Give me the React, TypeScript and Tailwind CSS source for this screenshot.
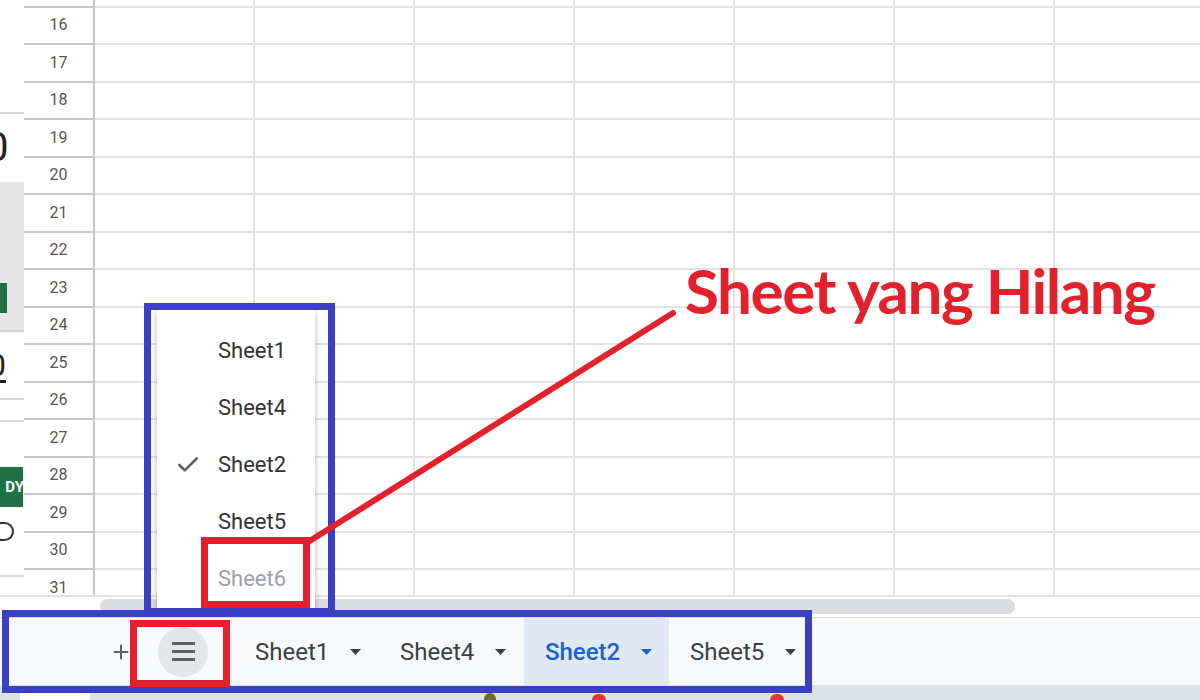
import { Check, Plus } from "lucide-react";

// rows 15..31, row 15 is mostly scrolled off the top
const rows = Array.from({ length: 17 }, (_, i) => 15 + i);
const colCount = 7;

interface MenuItem {
  name: string;
  checked?: boolean;
  hidden?: boolean;
}

const menuItems: MenuItem[] = [
  { name: "Sheet1" },
  { name: "Sheet4" },
  { name: "Sheet2", checked: true },
  { name: "Sheet5" },
  { name: "Sheet6", hidden: true },
];

const tabs = ["Sheet1", "Sheet4", "Sheet2", "Sheet5"];
const activeTab = "Sheet2";

const Caret = ({ color }: { color: string }) => (
  <svg width="11" height="6" viewBox="0 0 11 6">
    <path d="M0 0h11L5.5 6z" fill={color} />
  </svg>
);

// cut-off panel that peeks in on the far left
const LeftStrip = () => (
  <div className="w-[24px] shrink-0 flex flex-col overflow-hidden">
    <div className="h-[114px] shrink-0 border-b-2 border-[#d6d6d6]" />
    <div className="h-[68px] shrink-0 flex items-center">
      <span className="-ml-[14px] text-[40px] leading-none text-[#222]">0</span>
    </div>
    <div className="h-[150px] shrink-0 bg-[#e6e6e6] border-b-2 border-[#cfcfcf]">
      <div className="mt-[101px] h-[30px] w-[7px] bg-[#1e7145]" />
    </div>
    <div className="h-[68px] shrink-0 border-b-2 border-[#d6d6d6] flex items-center">
      <span className="-ml-[12px] text-[32px] leading-none text-[#222] underline underline-offset-4">0</span>
    </div>
    <div className="h-[22px] shrink-0 border-b-2 border-[#dcdcdc]" />
    <div className="h-[45px] shrink-0" />
    <div className="h-[40px] shrink-0 w-[23px] bg-[#1e7145] flex items-center justify-end overflow-hidden">
      <span className="-mr-[1px] text-[15px] font-bold text-white leading-none">DY</span>
    </div>
    <div className="h-[48px] shrink-0 flex items-center">
      <div className="-ml-[8px] w-[22px] h-[19px] shrink-0 rounded-full border-2 border-[#333]" />
    </div>
    <div className="h-[22px] shrink-0 border-b-2 border-[#d6d6d6]" />
  </div>
);

const App = () => {
  return (
    <div className="relative w-[1200px] h-[700px] overflow-hidden bg-white font-['Roboto',sans-serif]">
      <div className="flex flex-col h-full">
        {/* grid */}
        <div className="flex h-[595px] shrink-0 overflow-hidden">
          <LeftStrip />
          <div className="flex-1 overflow-hidden">
            <div className="-mt-[30px]">
              {rows.map((r) => (
                <div key={r} className="flex h-[37.5px]">
                  <div className="w-[71px] shrink-0 border-r-2 border-b-2 border-[#c8c8c8] flex items-center justify-center text-[16px] text-[#555]">
                    {r}
                  </div>
                  {Array.from({ length: colCount }, (_, c) => (
                    <div key={c} className="w-[160px] shrink-0 border-r-2 border-b-2 border-[#e2e2e2]" />
                  ))}
                </div>
              ))}
            </div>
          </div>
        </div>

        {/* horizontal scrollbar */}
        <div className="h-[23px] shrink-0 border-t-2 border-b border-t-[#e2e2e2] border-b-[#dadce0] pl-[100px] pt-[2px]">
          <div className="w-[915px] h-[15px] rounded-full bg-[#dadce0]" />
        </div>

        {/* sheet tabs bar */}
        <div className="h-[67px] shrink-0 bg-[#f8f9fa] flex items-stretch">
          <div className="pl-[110px] flex items-center">
            <Plus size={22} strokeWidth={2.2} className="text-[#5f6368]" />
          </div>
          <div className="ml-[26px] flex items-center">
            <div className="w-[50px] h-[50px] rounded-full bg-[#e3e5e8] flex flex-col items-center justify-center gap-[5px]">
              <div className="w-[23px] h-[3px] bg-[#5f6368]" />
              <div className="w-[23px] h-[3px] bg-[#5f6368]" />
              <div className="w-[23px] h-[3px] bg-[#5f6368]" />
            </div>
          </div>
          <div className="ml-[26px] flex items-stretch">
            {tabs.map((t) => {
              const active = t === activeTab;
              return (
                <div
                  key={t}
                  className={
                    active
                      ? "w-[145px] flex items-center pl-[21px] gap-[21px] bg-[#e1e9f6]"
                      : "w-[145px] flex items-center pl-[21px] gap-[21px]"
                  }
                >
                  <span
                    className={
                      active
                        ? "text-[24px] font-medium text-[#1a62cf]"
                        : "text-[24px] text-[#3c4043]"
                    }
                  >
                    {t}
                  </span>
                  <Caret color={active ? "#1a62cf" : "#3c4043"} />
                </div>
              );
            })}
          </div>
        </div>

        {/* strip of the window below */}
        <div className="flex-1 bg-[#dde3ec] flex items-end">
          <div className="ml-[20px] w-[70px] h-[7px] bg-white" />
          <div className="ml-[394px] w-[12px] h-[7px] rounded-t-full bg-[#6b6a2a]" />
          <div className="ml-[96px] w-[14px] h-[6px] rounded-t-full bg-[#e33]" />
          <div className="ml-[164px] w-[14px] h-[6px] rounded-t-full bg-[#e33]" />
        </div>
      </div>

      {/* sheet list menu */}
      <div className="absolute left-[157px] top-[310px] w-[158px] h-[298px] bg-white shadow-[0_2px_6px_rgba(0,0,0,0.3)] pt-[12px]">
        {menuItems.map((m) => (
          <div key={m.name} className="h-[57px] flex items-center">
            <div className="w-[61px] flex justify-center">
              {m.checked && <Check size={26} strokeWidth={2.4} className="text-[#5f6368]" />}
            </div>
            <span className={m.hidden ? "text-[22px] text-[#9aa0a6]" : "text-[22px] text-[#333]"}>
              {m.name}
            </span>
          </div>
        ))}
      </div>

      {/* annotations */}
      <div className="absolute left-[144px] top-[303px] w-[191px] h-[312px] border-[7px] border-[#3b3fc4]" />
      <div className="absolute left-[2px] top-[610px] w-[810px] h-[83px] border-[7px] border-[#3b3fc4]" />
      <div className="absolute left-[201px] top-[537px] w-[109px] h-[71px] border-[7px] border-[#e3202b]" />
      <div className="absolute left-[130px] top-[620px] w-[100px] h-[67px] border-[7px] border-[#e3202b]" />

      <svg className="absolute inset-0 pointer-events-none" width="1200" height="700">
        <line x1="308" y1="542" x2="673" y2="313" stroke="#e3202b" strokeWidth="6" strokeLinecap="round" />
      </svg>

      <div className="absolute left-[685px] top-[259px] text-[62px] leading-none font-bold text-[#e3202b] font-['Lato',sans-serif] tracking-[-1.5px]">
        Sheet yang Hilang
      </div>
    </div>
  );
};

export default App;
